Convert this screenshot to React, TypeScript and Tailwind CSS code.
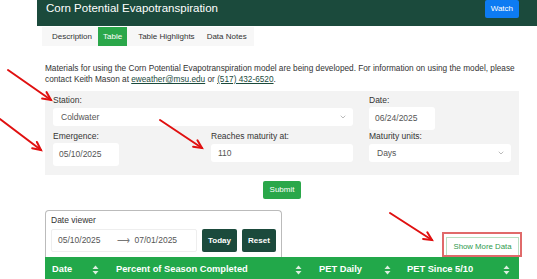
import { ChevronDown } from 'lucide-react';

function SortIcon() {
  return (
    <svg width="7" height="10" viewBox="0 0 7 10" className="shrink-0">
      <path d="M3.5 0.5 L6.5 4 L0.5 4 Z" fill="#dcefe0" />
      <path d="M3.5 9.5 L6.5 6 L0.5 6 Z" fill="#dcefe0" />
    </svg>
  );
}

function Arrow({ x1, y1, x2, y2 }: { x1: number; y1: number; x2: number; y2: number }) {
  const ang = Math.atan2(y2 - y1, x2 - x1);
  const h = 9;
  const a1 = ang + Math.PI - 0.45;
  const a2 = ang + Math.PI + 0.45;
  return (
    <g stroke="#e01010" strokeWidth="2" fill="none" strokeLinecap="round">
      <line x1={x1} y1={y1} x2={x2} y2={y2} />
      <polyline
        points={`${x2 + h * Math.cos(a1)},${y2 + h * Math.sin(a1)} ${x2},${y2} ${x2 + h * Math.cos(a2)},${y2 + h * Math.sin(a2)}`}
      />
    </g>
  );
}

export default function App() {
  return (
    <div className="relative w-[537px] h-[279px] overflow-hidden bg-white text-[#333] font-['Liberation_Sans',Arial,sans-serif]">
      <div className="ml-[37px]">
        <div className="h-[26px] bg-[#1b4a3c] flex items-start justify-between pl-[9px] pr-[18px]">
          <span className="text-white text-[11.5px] leading-none mt-[3px]">Corn Potential Evapotranspiration</span>
          <span className="bg-[#0d7bf2] text-white text-[8px] px-[6px] h-[18px] flex items-center rounded-[2px]">Watch</span>
        </div>
        <div className="flex mt-[1px] ml-[5px] w-[212px] h-[19px] bg-[#f7f7f7] text-[8px] items-stretch">
          <span className="pl-[10px] pr-[6px] flex items-center text-[#333]">Description</span>
          <span className="px-[5px] flex items-center bg-[#2aa74a] text-white">Table</span>
          <span className="px-[11px] flex items-center">Table Highlights</span>
          <span className="px-[1px] flex items-center">Data Notes</span>
        </div>

        <div className="px-[8px] w-[490px]">
          <p className="mt-[17px] text-[8.25px] leading-[11px] text-[#333]">
            Materials for using the Corn Potential Evapotranspiration model are being developed. For information on using the model, please contact Keith Mason at{' '}
            <span className="underline text-[#1b4a3c]">eweather@msu.edu</span> or <span className="underline text-[#1b4a3c]">(517) 432-6520</span>.
          </p>

          <div className="mt-[6px] w-[474px] h-[84px] bg-[#f3f3f3] px-[8px] pt-[4px] text-[8.5px]">
            <div className="grid grid-cols-[142px_142px_142px] gap-x-[16px]">
              <div className="col-span-2">
                <div className="leading-[11px]">Station:</div>
                <div className="mt-[2px] w-full h-[18px] bg-white rounded-[3px] flex items-center justify-between pl-[8px] pr-[6px] text-[#555]">
                  <span>Coldwater</span>
                  <ChevronDown size={8} strokeWidth={1.5} color="#777" />
                </div>
              </div>
              <div>
                <div className="leading-[11px]">Date:</div>
                <div className="mt-[1px] w-[66px] h-[23px] bg-white rounded-[3px] flex items-center px-[6px] text-[#555]">06/24/2025</div>
              </div>
            </div>
            <div className="grid grid-cols-[142px_142px_142px] gap-x-[16px] mt-[1px]">
              <div>
                <div className="leading-[11px]">Emergence:</div>
                <div className="mt-[1px] w-[66px] h-[23px] bg-white rounded-[3px] flex items-center px-[6px] text-[#555]">05/10/2025</div>
              </div>
              <div>
                <div className="leading-[11px]">Reaches maturity at:</div>
                <div className="mt-[2px] w-[142px] h-[18px] bg-white rounded-[3px] flex items-center px-[7px] text-[#555]">110</div>
              </div>
              <div>
                <div className="leading-[11px]">Maturity units:</div>
                <div className="mt-[2px] w-[142px] h-[18px] bg-white rounded-[3px] flex items-center justify-between pl-[8px] pr-[6px] text-[#555]">
                  <span>Days</span>
                  <ChevronDown size={8} strokeWidth={1.5} color="#777" />
                </div>
              </div>
            </div>
          </div>

          <div className="flex justify-center mt-[6px] w-[474px]">
            <span className="h-[18px] px-[7px] flex items-center bg-[#2aa74a] text-white text-[8px] rounded-[2px]">Submit</span>
          </div>

          <div className="flex items-end justify-between w-[474px] mt-[11px]">
            <div className="w-[237px] h-[47px] border border-[#bbb] border-b-0 rounded-t-[4px] px-[5px] pt-[4px]">
              <div className="text-[8.5px] leading-[11px]">Date viewer</div>
              <div className="flex gap-[5px] mt-[3px]">
                <div className="w-[146px] h-[23px] bg-white border border-[#eee] rounded-[2px] flex items-center px-[6px] text-[8.5px] text-[#555]">
                  <span>05/10/2025</span>
                  <span className="ml-[16px] text-[#777]">⟶</span>
                  <span className="ml-[5px]">07/01/2025</span>
                </div>
                <span className="w-[35px] h-[23px] bg-[#1b4a3c] text-white text-[8px] font-bold rounded-[2px] flex items-center justify-center">Today</span>
                <span className="w-[34px] h-[23px] bg-[#1b4a3c] text-white text-[8px] font-bold rounded-[2px] flex items-center justify-center">Reset</span>
              </div>
            </div>
            <div className="h-[20px] w-[73px] border border-[#b9e0c2] bg-white text-[#2e9a4e] text-[7.8px] flex items-center justify-center">Show More Data</div>
          </div>

          <div className="w-[474px] h-[25px] bg-[#22a84a] text-white font-bold text-[9.3px] flex items-center">
            <span className="ml-[7px] w-[40px]">Date</span>
            <SortIcon />
            <span className="ml-[17px] w-[179px]">Percent of Season Completed</span>
            <SortIcon />
            <span className="ml-[17px] w-[65px]">PET Daily</span>
            <SortIcon />
            <span className="ml-[16px] w-[96px]">PET Since 5/10</span>
            <SortIcon />
          </div>
        </div>
      </div>

      <div className="absolute left-[442px] top-[232px] w-[80px] h-[25px] border-2 border-[#e06a6a] pointer-events-none" />

      <svg className="absolute left-0 top-0 pointer-events-none" width="537" height="279">
        <Arrow x1={8} y1={70} x2={51} y2={100} />
        <Arrow x1={0} y1={119} x2={41} y2={150} />
        <Arrow x1={160} y1={120} x2={202} y2={148} />
        <Arrow x1={390} y1={213} x2={432} y2={240} />
      </svg>
    </div>
  );
}
